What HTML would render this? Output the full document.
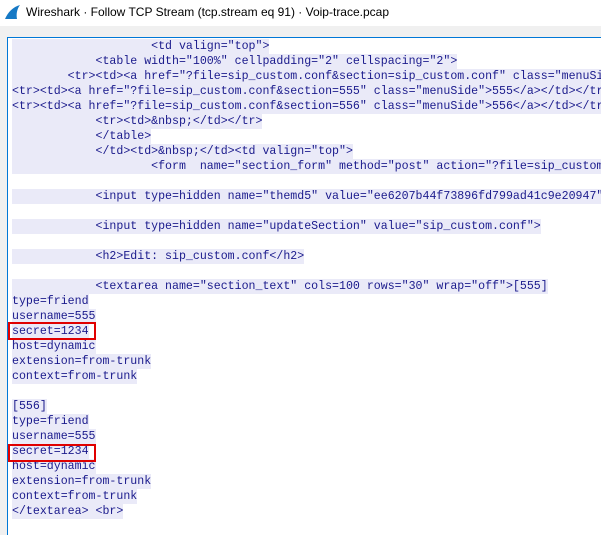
<!DOCTYPE html>
<html><head><meta charset="utf-8"><style>
html,body{margin:0;padding:0;width:601px;height:534px;overflow:hidden;background:#f0f0f0;font-family:"Liberation Sans",sans-serif;}
.title{position:absolute;left:0;top:0;width:601px;height:26px;background:#fff;}
.title span{position:absolute;left:26px;top:5px;font-size:12px;color:#000;}
.box{position:absolute;left:7px;top:37px;width:594px;height:497px;border-top:1px solid #0078d7;border-left:1px solid #0078d7;background:#fff;overflow:hidden;}
pre{position:absolute;left:4px;top:1px;margin:0;font-family:"Liberation Mono",monospace;font-size:11.6px;line-height:15px;color:#1a1a8c;white-space:pre;}
pre span{background:#eaeaf8;display:inline-block;height:15px;vertical-align:top;}
.red{position:absolute;border:2px solid #e00000;}
</style></head><body>
<div class="title"><svg style="position:absolute;left:4px;top:4px" width="17" height="16" viewBox="0 0 17 16"><path d="M1 15 C4 8 9 3 16 1 C13 5 12 10 13 15 Z" fill="#1679c5"/></svg><span>Wireshark · Follow TCP Stream (tcp.stream eq 91) · Voip-trace.pcap</span></div>
<div class="box"><pre><span>                    &lt;td valign="top"&gt;</span>
<span>            &lt;table width="100%" cellpadding="2" cellspacing="2"&gt;</span>
<span>        &lt;tr&gt;&lt;td&gt;&lt;a href="?file=sip_custom.conf&amp;section=sip_custom.conf" class="menuSide"&gt;</span>
<span>&lt;tr&gt;&lt;td&gt;&lt;a href="?file=sip_custom.conf&amp;section=555" class="menuSide"&gt;555&lt;/a&gt;&lt;/td&gt;&lt;/tr&gt;</span>
<span>&lt;tr&gt;&lt;td&gt;&lt;a href="?file=sip_custom.conf&amp;section=556" class="menuSide"&gt;556&lt;/a&gt;&lt;/td&gt;&lt;/tr&gt;</span>
<span>            &lt;tr&gt;&lt;td&gt;&amp;nbsp;&lt;/td&gt;&lt;/tr&gt;</span>
<span>            &lt;/table&gt;</span>
<span>            &lt;/td&gt;&lt;td&gt;&amp;nbsp;&lt;/td&gt;&lt;td valign="top"&gt;</span>
<span>                    &lt;form  name="section_form" method="post" action="?file=sip_custom.conf"&gt;</span>

<span>            &lt;input type=hidden name="themd5" value="ee6207b44f73896fd799ad41c9e20947"&gt;</span>

<span>            &lt;input type=hidden name="updateSection" value="sip_custom.conf"&gt;</span>

<span>            &lt;h2&gt;Edit: sip_custom.conf&lt;/h2&gt;</span>

<span>            &lt;textarea name="section_text" cols=100 rows="30" wrap="off"&gt;[555]</span>
<span>type=friend</span>
<span>username=555</span>
<span>secret=1234</span>
<span>host=dynamic</span>
<span>extension=from-trunk</span>
<span>context=from-trunk</span>

<span>[556]</span>
<span>type=friend</span>
<span>username=555</span>
<span>secret=1234</span>
<span>host=dynamic</span>
<span>extension=from-trunk</span>
<span>context=from-trunk</span>
<span>&lt;/textarea&gt; &lt;br&gt;</span>
</pre></div>
<div class="red" style="left:8px;top:322px;width:84px;height:14px;"></div>
<div class="red" style="left:8px;top:444px;width:84px;height:14px;"></div>
</body></html>
